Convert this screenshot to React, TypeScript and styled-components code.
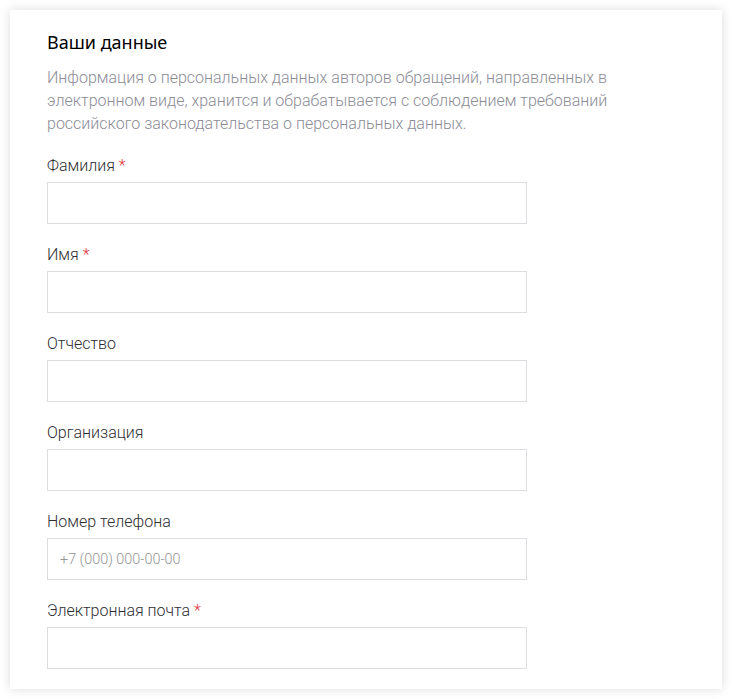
import React from 'react';
import styled, { createGlobalStyle } from 'styled-components';

const GlobalStyle = createGlobalStyle`
  body {
    margin: 0;
    background: #fff;
    font-family: Roboto, "Liberation Sans", sans-serif;
  }
`;

interface Field {
  label: string;
  required?: boolean;
  placeholder?: string;
  type?: string;
}

const fields: Field[] = [
  { label: 'Фамилия', required: true },
  { label: 'Имя', required: true },
  { label: 'Отчество' },
  { label: 'Организация' },
  { label: 'Номер телефона', placeholder: '+7 (000) 000-00-00', type: 'tel' },
  { label: 'Электронная почта', required: true, type: 'email' },
];

const App = () => {
  return (
    <>
      <GlobalStyle />
      <Card>
        <Title>Ваши данные</Title>
        <Note>
          Информация о персональных данных авторов обращений, направленных в
          электронном виде, хранится и обрабатывается с соблюдением требований
          российского законодательства о персональных данных.
        </Note>
        <Fields>
          {fields.map((f) => (
            <FieldRow key={f.label}>
              <Label>
                {f.label}
                {f.required && <Star> *</Star>}
              </Label>
              <Input type={f.type || 'text'} placeholder={f.placeholder} />
            </FieldRow>
          ))}
        </Fields>
      </Card>
    </>
  );
};

export default App;

const Card = styled.div`
  margin: 10px;
  width: 712px;
  height: 679px;
  box-sizing: border-box;
  padding: 20px 37px 20px;
  background: #fff;
  box-shadow: 0 0 10px rgba(0, 0, 0, 0.14);
`;

const Title = styled.h2`
  margin: 0;
  font-family: "Noto Sans", "Open Sans", sans-serif;
  font-weight: 400;
  font-size: 18px;
  line-height: 24px;
  color: #000;
`;

const Note = styled.p`
  margin: 12px 0 0;
  font-weight: 300;
  font-size: 16px;
  line-height: 23px;
  color: #8c8c97;
`;

const Fields = styled.div`
  display: flex;
  flex-direction: column;
  gap: 20px;
  margin-top: 20px;
`;

const FieldRow = styled.div`
  display: flex;
  flex-direction: column;
  gap: 6px;
`;

const Label = styled.label`
  padding-top: 1px;
  font-weight: 300;
  font-size: 16px;
  line-height: 20px;
  color: #2e2e33;
`;

const Star = styled.span`
  color: #e0303a;
`;

const Input = styled.input`
  width: 480px;
  height: 42px;
  box-sizing: border-box;
  border: 1px solid #dcdde0;
  padding: 0 12px;
  font-family: Roboto, "Liberation Sans", sans-serif;
  font-weight: 300;
  font-size: 14.4px;
  color: #333;
  outline: none;
  &::placeholder {
    color: #959595;
  }
`;
